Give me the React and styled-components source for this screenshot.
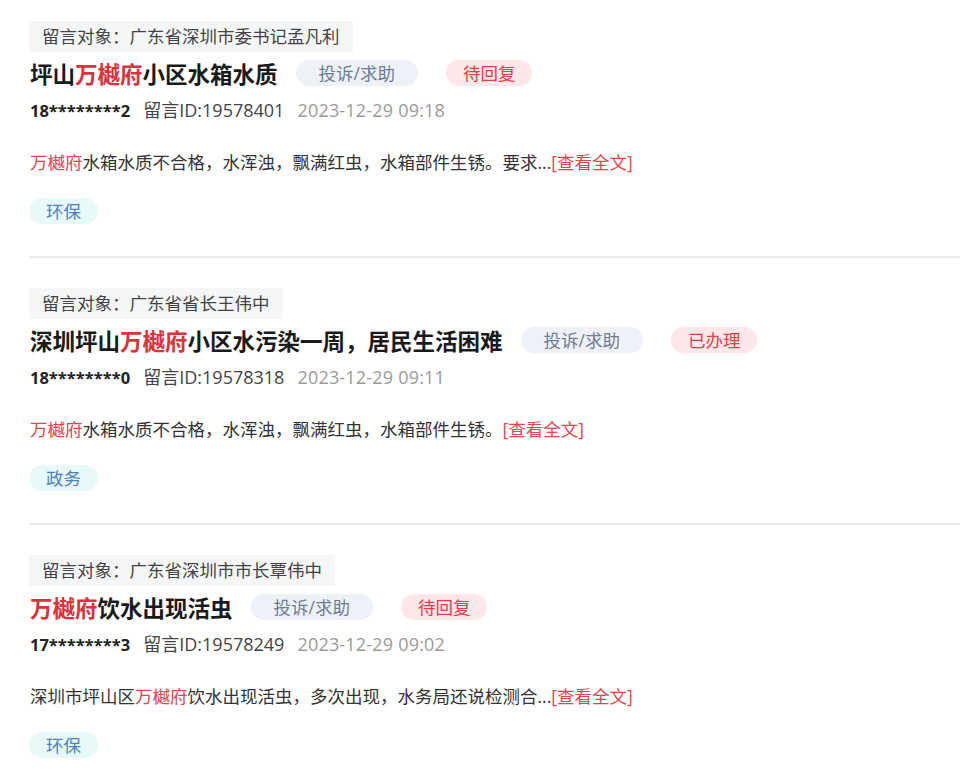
import React from 'react'
import styled, { createGlobalStyle } from 'styled-components'

const GlobalStyle = createGlobalStyle`
    body {
        margin: 0;
        background: #fff;
        font-family: "Open Sans", "Noto Sans CJK SC", sans-serif;
        color: #333;
    }
`;

const List = styled.div`
    padding: 21px 0 0 29px;
    width: 931px;
`;

const Item = styled.div`
    padding-bottom: 32px;
    border-bottom: 2px solid #ebebeb;

    & + & {
        padding-top: 30px;
    }
`;

const Target = styled.div`
    display: inline-block;
    height: 31px;
    line-height: 31px;
    padding: 0 13px;
    background: #f5f6f8;
    font-size: 17.5px;
    color: #444;
`;

const TitleRow = styled.div`
    display: flex;
    align-items: center;
    height: 30px;
    margin-top: 6px;
`;

const Title = styled.h3`
    margin: 0 18px 0 1px;
    font-size: 22.5px;
    font-weight: 700;
    color: #1a1a1a;
`;

const Mark = styled.span`
    color: ${p => p.light ? '#e0464f' : '#d9333d'};
`;

const Pill = styled.span`
    display: inline-block;
    height: 26px;
    line-height: 26px;
    padding: 0 ${p => p.pad}px;
    border-radius: 13px;
    font-size: 17.5px;
    background: ${p => p.bg};
    color: ${p => p.fg};
    margin-right: ${p => p.gap || 0}px;
`;

const Meta = styled.div`
    display: flex;
    align-items: baseline;
    gap: 13px;
    margin-top: 10px;
    padding-left: 1px;
    font-size: 18px;
    line-height: 24px;
`;

const User = styled.span`
    font-size: 16.5px;
    font-weight: 700;
    color: #222;
`;

const MsgId = styled.span`
    color: #444;
`;

const Time = styled.span`
    color: #9a9a9a;
    letter-spacing: 0.2px;
`;

const Content = styled.p`
    margin: 27px 0 0 1px;
    font-size: 17.5px;
    line-height: 24px;
    color: #333;
`;

const More = styled.a`
    color: #e0464f;
    cursor: pointer;
`;

const Category = styled.span`
    display: inline-block;
    margin-top: 24px;
    height: 26px;
    line-height: 26px;
    padding: 0 17px;
    border-radius: 13px;
    background: #e8f9f9;
    color: #4f7fbf;
    font-size: 17.5px;
`;

const statusStyle = {
    '待回复': { bg: '#fde7e9', fg: '#d9404a' },
    '已办理': { bg: '#fde7e9', fg: '#d9404a' },
}

const hl = (parts, light) => parts.map((t, i) =>
    i % 2 === 1 ? <Mark key={i} light={light}>{t}</Mark> : <React.Fragment key={i}>{t}</React.Fragment>
)

const messages = [
    {
        target: '广东省深圳市委书记孟凡利',
        title: ['坪山', '万樾府', '小区水箱水质'],
        status: '待回复',
        user: '18********2',
        id: '19578401',
        time: '2023-12-29 09:18',
        content: ['', '万樾府', '水箱水质不合格，水浑浊，飘满红虫，水箱部件生锈。要求...'],
        tag: '环保',
    },
    {
        target: '广东省省长王伟中',
        title: ['深圳坪山', '万樾府', '小区水污染一周，居民生活困难'],
        status: '已办理',
        user: '18********0',
        id: '19578318',
        time: '2023-12-29 09:11',
        content: ['', '万樾府', '水箱水质不合格，水浑浊，飘满红虫，水箱部件生锈。'],
        tag: '政务',
    },
    {
        target: '广东省深圳市市长覃伟中',
        title: ['', '万樾府', '饮水出现活虫'],
        status: '待回复',
        user: '17********3',
        id: '19578249',
        time: '2023-12-29 09:02',
        content: ['深圳市坪山区', '万樾府', '饮水出现活虫，多次出现，水务局还说检测合...'],
        tag: '环保',
    },
]

const MessageItem = ({ msg }) => {
    const st = statusStyle[msg.status]
    return (
        <Item>
            <Target>留言对象：{msg.target}</Target>
            <TitleRow>
                <Title>{hl(msg.title)}</Title>
                <Pill pad={23} gap={28} bg="#eef2f8" fg="#6e7d92">投诉/求助</Pill>
                <Pill pad={17} bg={st.bg} fg={st.fg}>{msg.status}</Pill>
            </TitleRow>
            <Meta>
                <User>{msg.user}</User>
                <MsgId>留言ID:{msg.id}</MsgId>
                <Time>{msg.time}</Time>
            </Meta>
            <Content>
                {hl(msg.content, true)}
                <More>[查看全文]</More>
            </Content>
            <Category>{msg.tag}</Category>
        </Item>
    )
}

export default function App() {
    return (
        <>
            <GlobalStyle />
            <List>
                {messages.map(m => <MessageItem key={m.id} msg={m} />)}
            </List>
        </>
    )
}
